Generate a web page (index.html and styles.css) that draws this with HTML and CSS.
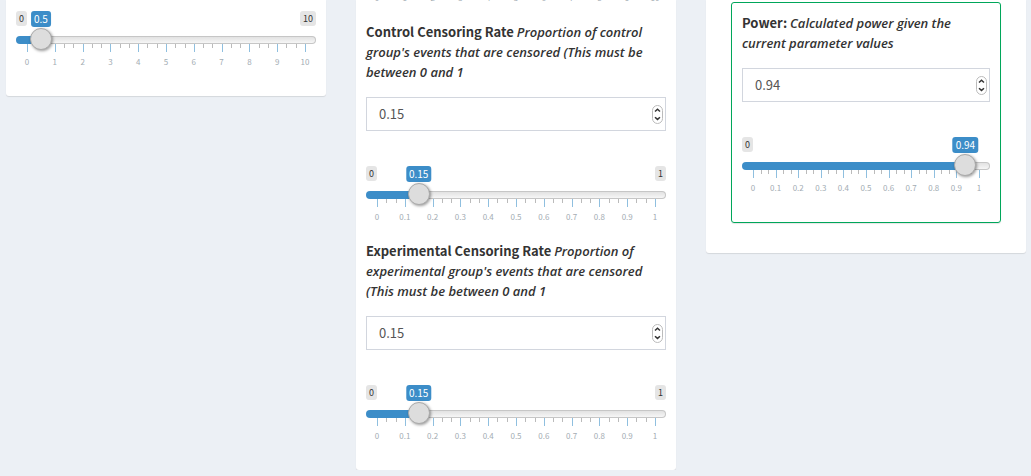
FILE: index.html
```html
<!DOCTYPE html>
<html lang="en">
<head>
<meta charset="utf-8">
<title>Power calculator</title>
<link rel="stylesheet" href="styles.css">
</head>
<body>
<main class="columns">
  <section class="card">
    <div class="slider" data-min="0" data-max="10" data-value="0.5" data-step="0.1" data-label="Rate"></div>
  </section>

  <section class="card">
    <div class="scale-tail" aria-hidden="true"><div class="labels" data-labels="0 1 2 3 4 5 6 7 8 9 10"></div></div>
    <div class="field">
      <label class="title" for="control"><b>Control Censoring Rate</b> <i>Proportion of control group's events that are censored (This must be between 0 and 1</i></label>
      <div class="number"><input id="control" type="number" value="0.15" min="0" max="1" step="0.01"></div>
    </div>
    <div class="slider" data-min="0" data-max="1" data-value="0.15" data-step="0.01" data-label="Control censoring rate"></div>
    <div class="field next">
      <label class="title" for="experimental"><b>Experimental Censoring Rate</b> <i>Proportion of experimental group's events that are censored (This must be between 0 and 1</i></label>
      <div class="number"><input id="experimental" type="number" value="0.15" min="0" max="1" step="0.01"></div>
    </div>
    <div class="slider" data-min="0" data-max="1" data-value="0.15" data-step="0.01" data-label="Experimental censoring rate"></div>
  </section>

  <section class="card result">
    <div class="panel">
      <div class="field">
        <label class="title" for="power"><b>Power:</b> <i>Calculated power given the current parameter values</i></label>
        <div class="number"><input id="power" type="number" value="0.94" min="0" max="1" step="0.01"></div>
      </div>
      <div class="slider" data-min="0" data-max="1" data-value="0.94" data-step="0.01" data-label="Power"></div>
    </div>
  </section>
</main>
<script src="script.js"></script>
</body>
</html>
```
FILE: styles.css
```css
* { box-sizing: border-box; }

body {
  margin: 0;
  background: #ecf0f5;
  color: #333;
  font-family: "Noto Sans CJK SC", "Open Sans", sans-serif;
  font-size: 13px;
  line-height: 20px;
}

.columns {
  display: grid;
  grid-template-columns: repeat(3, minmax(0, 1fr));
  gap: 30px;
  align-items: start;
  padding: 0 5px 0 6px;
}

.card {
  padding: 11px 10px 24px;
  background: #fff;
  border-radius: 0 0 3px 3px;
  box-shadow: 0 1px 1px rgba(0, 0, 0, 0.1);
}

.card:nth-child(2) { padding-top: 0; }

.card.result { padding: 2px 25px 30px; }

.panel {
  padding: 10px 10px 24px;
  border: 1px solid #00a65a;
  border-radius: 3px;
  box-shadow: 0 1px 1px rgba(0, 0, 0, 0.1);
}

.scale-tail {
  display: flex;
  flex-direction: column;
  justify-content: flex-end;
  height: 8px;
  margin-bottom: 14px;
  overflow: hidden;
}

.title { display: block; }
.title b { font-weight: 700; }
.title i { font-family: "Open Sans", sans-serif; font-weight: 600; }

.field { margin-bottom: 35px; }
.field.next { margin-top: 14px; }

.number {
  position: relative;
  margin-top: 15px;
}

.number input {
  display: block;
  width: 100%;
  height: 34px;
  padding: 5px 12px 7px;
  border: 1px solid #d2d6de;
  border-radius: 0;
  background: #fff;
  color: #555;
  font: inherit;
  appearance: textfield;
}

.number input::-webkit-inner-spin-button { appearance: none; }

.stepper {
  position: absolute;
  top: 8px;
  right: 3px;
  width: 11px;
  height: 19px;
}

.slider { position: relative; }

.badges {
  display: flex;
  justify-content: space-between;
  height: 25px;
  align-items: flex-start;
}

.badge {
  min-width: 11px;
  height: 15px;
  padding: 0 3px;
  border-radius: 3px;
  background: #e5e5e5;
  color: #333;
  font-size: 9px;
  line-height: 15px;
  text-align: center;
}

.badge.current {
  position: absolute;
  top: 0;
  left: calc(11px + var(--position) * (100% - 22px));
  height: 16px;
  transform: translateX(-50%);
  background: #3c8dc8;
  color: #fff;
  font-size: 10px;
  line-height: 16px;
}

.slider input {
  display: block;
  width: 100%;
  height: 8px;
  margin: 0;
  appearance: none;
  border: 1px solid transparent;
  border-radius: 8px;
  background:
    linear-gradient(#3c8dc8, #3c8dc8) border-box 0 0 / calc(11px + var(--position) * (100% - 22px)) 100% no-repeat,
    linear-gradient(#e2e2e2, #f6f6f6) padding-box,
    linear-gradient(#c6c6c6, #c6c6c6) border-box;
}

.slider input::-webkit-slider-runnable-track {
  height: 8px;
  margin: 0 -1px;
}

.slider input::-webkit-slider-thumb {
  appearance: none;
  width: 22px;
  height: 22px;
  margin-top: -8px;
  border: 1px solid #aaa;
  border-radius: 50%;
  background: #ddd;
  box-shadow: 1px 1px 3px rgba(0, 0, 0, 0.4);
  position: relative;
  z-index: 1;
}

.ticks {
  display: flex;
  justify-content: space-between;
  height: 8px;
  padding: 0 10px 0 11px;
}

.tick {
  width: 1px;
  height: 4px;
  background: #bbb;
}

.tick.major {
  height: 8px;
  background: #8fbfdf;
}

.labels {
  display: flex;
  justify-content: space-between;
  padding: 0 11px;
  color: #a3acb3;
  font-size: 8px;
  line-height: 20px;
}

.labels span {
  display: flex;
  justify-content: center;
  width: 0;
}
```
FILE: script.js
```js
function addLabels(row, values) {
  values.forEach((value) => {
    const item = document.createElement("span");
    item.textContent = value;
    row.append(item);
  });
}

document.querySelectorAll("[data-labels]").forEach((row) => {
  addLabels(row, row.dataset.labels.split(" "));
});

document.querySelectorAll(".number").forEach((box) => {
  box.insertAdjacentHTML("beforeend",
    `<svg class="stepper" viewBox="0 0 11 19" aria-hidden="true">
      <rect x=".5" y=".5" width="10" height="18" rx="5" fill="#fff" stroke="#bbb"/>
      <path d="M3 6.5L5.5 4.3L8 6.5M3 12.2L5.5 14.4L8 12.2" fill="none" stroke="#333" stroke-width="1.5"/>
    </svg>`);
});

document.querySelectorAll(".slider").forEach((slider) => {
  const { min, max, value, step, label } = slider.dataset;
  slider.innerHTML =
    `<div class="badges"><span class="badge">${min}</span><span class="badge">${max}</span></div>
    <output class="badge current"></output>
    <input type="range" min="${min}" max="${max}" step="${step}" value="${value}" aria-label="${label}">
    <div class="ticks"></div>
    <div class="labels"></div>`;

  const ticks = slider.querySelector(".ticks");
  for (let i = 0; i <= 30; i++) {
    const tick = document.createElement("span");
    tick.className = i % 3 === 0 ? "tick major" : "tick";
    ticks.append(tick);
  }
  addLabels(slider.querySelector(".labels"),
    Array.from({ length: 11 }, (_, i) => i * max / 10));

  const input = slider.querySelector("input");
  const [low, high] = slider.querySelectorAll(".badges .badge");
  const update = () => {
    const position = (input.value - min) / (max - min);
    slider.style.setProperty("--position", position);
    slider.querySelector("output").textContent = input.value;
    // An end badge gives way when the current value comes close to it.
    low.style.visibility = position < 0.04 ? "hidden" : "visible";
    high.style.visibility = position > 0.92 ? "hidden" : "visible";
  };
  input.addEventListener("input", update);
  update();
});
```
